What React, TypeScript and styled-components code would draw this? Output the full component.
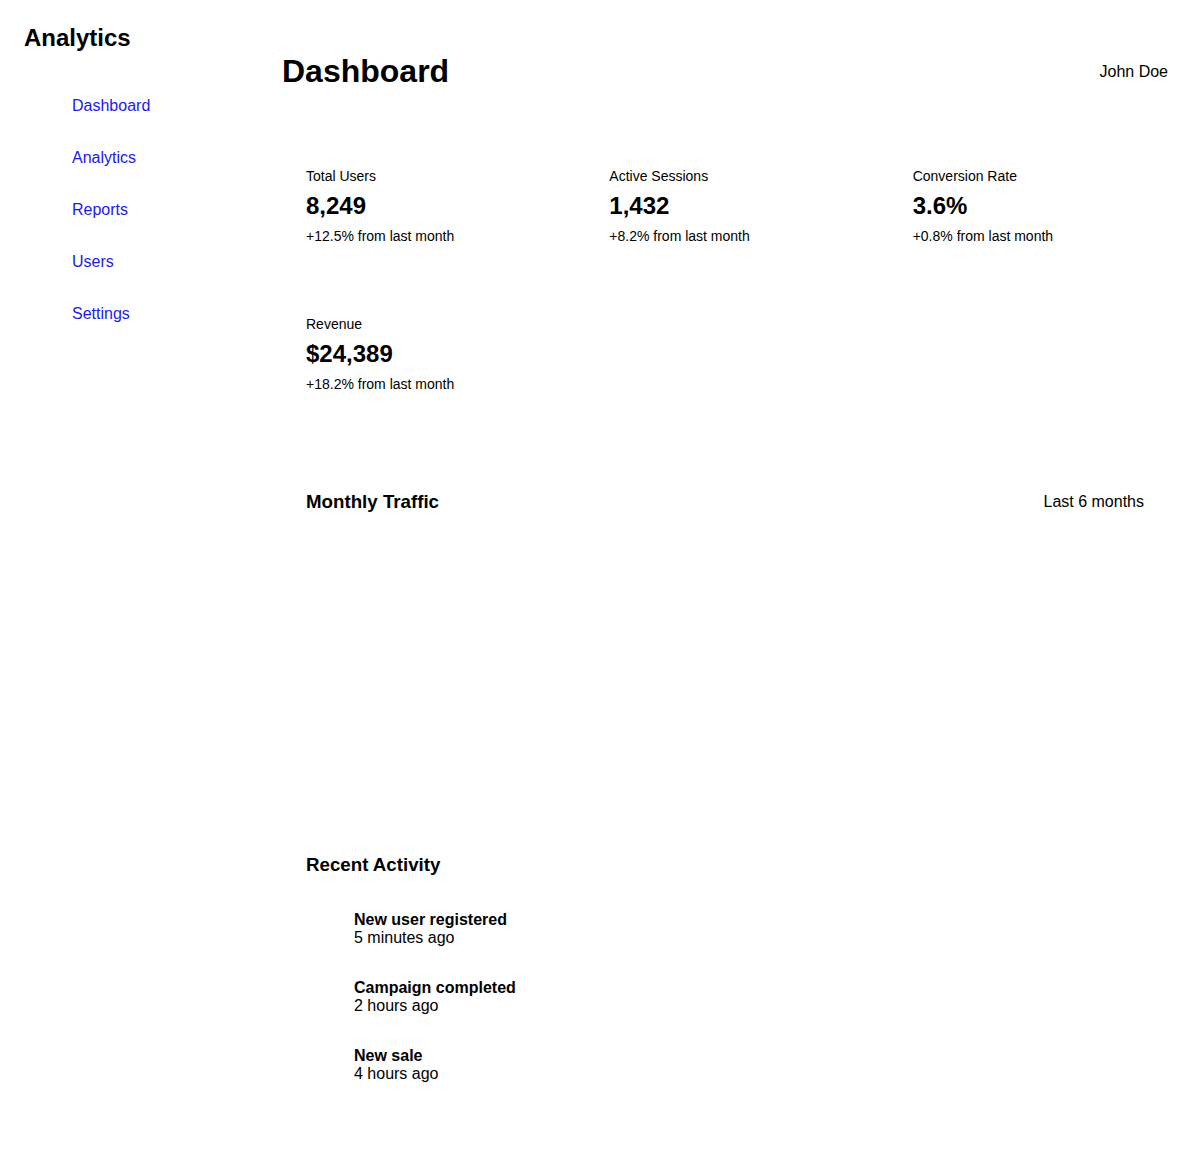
import React from "react";
import styled, { createGlobalStyle } from "styled-components";

const GlobalStyle = createGlobalStyle`
  body {
    margin: 8px;
    font-family: "Liberation Sans", Arial, sans-serif;
    color: #000;
    background: #fff;
  }
`;

const Layout = styled.div`
  display: flex;
  align-items: flex-start;
`;

const Sidebar = styled.aside`
  width: 250px;
  flex-shrink: 0;
  box-sizing: border-box;
  padding: 16px;
`;

const Brand = styled.h2`
  margin: 0;
  font-size: 24px;
  font-weight: bold;
`;

const NavList = styled.ul`
  list-style: none;
  margin: 36.6px 0 0;
  padding: 0 0 0 40px;
  display: flex;
  flex-direction: column;
  gap: 18px;
`;

const NavLink = styled.a`
  display: inline-block;
  padding: 8px;
  font-size: 16px;
  color: #1a1aee;
  text-decoration: none;
`;

const Main = styled.main`
  flex: 1;
  min-width: 0;
  padding: 24px;
`;

const Header = styled.header`
  display: flex;
  align-items: center;
  justify-content: space-between;
  margin-bottom: 32px;
`;

const Title = styled.h1`
  margin: 21.44px 0;
  font-size: 32px;
  font-weight: bold;
`;

const UserName = styled.span`
  font-size: 16px;
`;

const StatsGrid = styled.section`
  display: grid;
  grid-template-columns: repeat(3, 1fr);
  gap: 24px;
  margin-bottom: 51px;
`;

const Card = styled.div`
  padding: 24px;
`;

const StatLabel = styled.div`
  font-size: 14px;
`;

const StatValue = styled.div`
  font-size: 24px;
  font-weight: bold;
  margin: 8px 0;
`;

const StatChange = styled.div`
  font-size: 14px;
`;

const Panel = styled.section<{ $gap?: number }>`
  padding: 24px;
  margin-bottom: ${(p) => p.$gap ?? 0}px;
`;

const PanelHeader = styled.div`
  display: flex;
  align-items: center;
  justify-content: space-between;
  margin-bottom: 24px;
`;

const PanelTitle = styled.h3`
  margin: 0;
  font-size: 18.72px;
  font-weight: bold;
`;

const PanelMeta = styled.span`
  font-size: 16px;
`;

const ChartArea = styled.div`
  height: 221.5px;
`;

const ActivityList = styled.ul`
  list-style: none;
  margin: 22.8px 0 0;
  padding: 0 0 0 40px;
  display: flex;
  flex-direction: column;
  gap: 7.8px;
`;

const ActivityItem = styled.li`
  padding: 12px 8px;
  font-size: 16px;
`;

const ActivityTitle = styled.div`
  font-weight: bold;
`;

const ActivityTime = styled.div``;

const navItems = ["Dashboard", "Analytics", "Reports", "Users", "Settings"];

const stats = [
  { label: "Total Users", value: "8,249", change: "+12.5% from last month" },
  { label: "Active Sessions", value: "1,432", change: "+8.2% from last month" },
  { label: "Conversion Rate", value: "3.6%", change: "+0.8% from last month" },
  { label: "Revenue", value: "$24,389", change: "+18.2% from last month" },
];

const activities = [
  { title: "New user registered", time: "5 minutes ago" },
  { title: "Campaign completed", time: "2 hours ago" },
  { title: "New sale", time: "4 hours ago" },
];

export default function App() {
  return (
    <>
      <GlobalStyle />
      <Layout>
        <Sidebar>
          <Brand>Analytics</Brand>
          <nav>
            <NavList>
              {navItems.map((item) => (
                <li key={item}>
                  <NavLink href="#">{item}</NavLink>
                </li>
              ))}
            </NavList>
          </nav>
        </Sidebar>
        <Main>
          <Header>
            <Title>Dashboard</Title>
            <UserName>John Doe</UserName>
          </Header>
          <StatsGrid>
            {stats.map((s) => (
              <Card key={s.label}>
                <StatLabel>{s.label}</StatLabel>
                <StatValue>{s.value}</StatValue>
                <StatChange>{s.change}</StatChange>
              </Card>
            ))}
          </StatsGrid>
          <Panel $gap={48}>
            <PanelHeader>
              <PanelTitle>Monthly Traffic</PanelTitle>
              <PanelMeta>Last 6 months</PanelMeta>
            </PanelHeader>
            <ChartArea />
          </Panel>
          <Panel>
            <PanelTitle>Recent Activity</PanelTitle>
            <ActivityList>
              {activities.map((a) => (
                <ActivityItem key={a.title}>
                  <ActivityTitle>{a.title}</ActivityTitle>
                  <ActivityTime>{a.time}</ActivityTime>
                </ActivityItem>
              ))}
            </ActivityList>
          </Panel>
        </Main>
      </Layout>
    </>
  );
}
